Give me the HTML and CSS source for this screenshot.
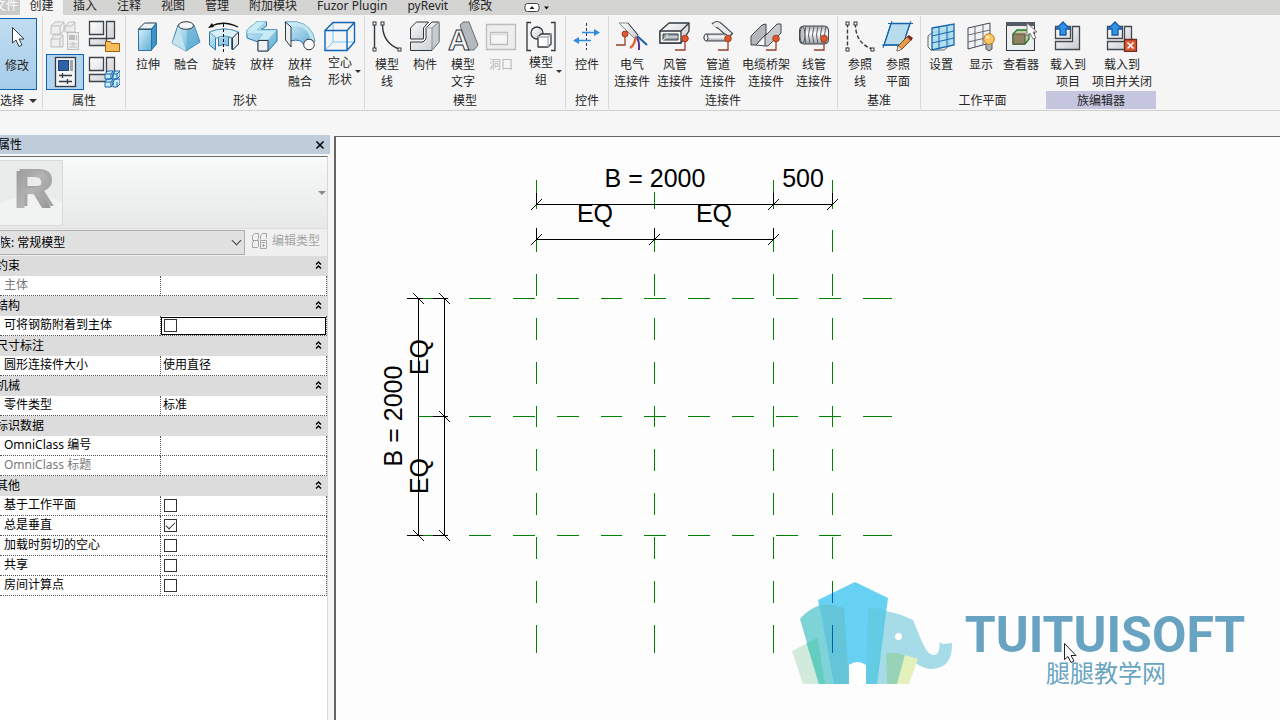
FILE: index.html
```html
<!DOCTYPE html>
<html lang="zh-CN">
<head>
<meta charset="utf-8">
<title>族编辑器</title>
<link rel="stylesheet" href="styles.css">
</head>
<body>
<svg class="defs" aria-hidden="true">
  <defs>
    <linearGradient id="blue" x1="0" y1="0" x2="1" y2="1"><stop offset="0" stop-color="#d5f0f9"/><stop offset="1" stop-color="#5fabd5"/></linearGradient>
    <linearGradient id="pale" x1="0" y1="0" x2="1" y2="1"><stop offset="0" stop-color="#ffffff"/><stop offset="1" stop-color="#c8cace"/></linearGradient>
    <linearGradient id="metal" x1="0" y1="0" x2="0" y2="1"><stop offset="0" stop-color="#a9adb1"/><stop offset=".4" stop-color="#ffffff"/><stop offset="1" stop-color="#9a9ea2"/></linearGradient>
    <linearGradient id="rgrey" x1="0" y1="0" x2="1" y2="1"><stop offset="0" stop-color="#929292"/><stop offset=".5" stop-color="#b4b4b4"/><stop offset="1" stop-color="#8d8d8d"/></linearGradient>
    <g id="plug"><path d="M26 17V30H16" fill="none" stroke="#94402a" stroke-width="1.3"/><circle cx="26" cy="18.500" r="3.300" fill="#e4572e" stroke="#9c3c20"/></g>
  </defs>
</svg>

<nav class="tabs">
  <button class="tab file">文件</button>
  <button class="tab current">创建</button>
  <button class="tab">插入</button>
  <button class="tab">注释</button>
  <button class="tab">视图</button>
  <button class="tab">管理</button>
  <button class="tab">附加模块</button>
  <button class="tab">Fuzor Plugin</button>
  <button class="tab">pyRevit</button>
  <button class="tab">修改</button>
  <button class="tab collapse" aria-label="最小化功能区"><svg width="26" height="12"><rect x="1" y="1.500" width="14" height="8" rx="2.500" fill="#fff" stroke="#444"/><path d="M5.500 7L8 4l2.500 3z" fill="#222"/><path d="M20 4.500h5L22.500 7.500z" fill="#111"/></svg></button>
</nav>

<header class="ribbon">
  <section class="panel select">
    <div class="tools">
      <button class="tool modify"><svg class="icon" viewBox="0 0 32 32"><path d="M11.500 6.500V22l3.500-3 3 6.500 3-1.500-3-6h5z" fill="#fff" stroke="#333b44"/></svg><span>修改</span></button>
    </div>
    <h2>选择 <i class="caret"></i></h2>
  </section>

  <section class="panel props">
    <div class="quad">
      <button class="mini" aria-label="类型属性"><svg class="icon" viewBox="0 0 32 32" fill="#eee" stroke="#bdbdbd"><path d="M2 6l4-4h9v8l-3 4H2zM16 6l4-4h6v10H16zM2 19l3-4h9v12H2z"/><path d="M2 6h9l4-4M11 6v8M16 6h7l3-4M2 19h9l3-4M11 19v8"/><rect x="18.500" y="12.500" width="11" height="17"/><rect x="20.500" y="15.500" width="5" height="4" fill="#bbb"/><path d="M27.500 15v5M20 24h8M24 22v4M20 27h8"/></svg></button>
      <button class="mini" aria-label="族类别"><svg class="icon" viewBox="0 0 32 32"><g fill="url(#pale)" stroke="#3c434b" stroke-width="1.300"><path d="M1.500 1.500h14v13h-14zM18.500 1.500h8v17h-8zM1.500 18.500h17v7h-17z"/></g><path d="M17.500 21.500h5l1 2h8v8h-14z" fill="#f3bd59" stroke="#a55c12"/></svg></button>
      <button class="mini on" aria-label="属性"><svg class="icon" viewBox="0 0 32 32"><rect x="6.500" y="1.500" width="20" height="29" fill="#f2f4f5" stroke="#333b44" stroke-width="1.300"/><rect x="9.500" y="4.500" width="10" height="10" fill="#2f61a6" stroke="#1d4377"/><path d="M22.500 4v11" stroke="#9da4aa" stroke-width="3"/><path d="M10 19.500h13M13.500 17v5M10 25.500h13M18.500 23v5" stroke="#333b44" stroke-width="1.300"/></svg></button>
      <button class="mini" aria-label="族类型"><svg class="icon" viewBox="0 0 32 32"><g fill="url(#pale)" stroke="#3c434b" stroke-width="1.300"><path d="M1.500 1.500h14v13h-14zM18.500 1.500h8v17h-8zM1.500 18.500h17v7h-17z"/></g><g fill="#c9ecfa" stroke="#1765ac"><path d="M17 18l3-3h5v5l-2 3h-6zM25 18l2-3h5v5l-3 3h-4zM17 26l2-3h6v5l-2 3h-6zM25 26l2-3h5v5l-3 3h-4z"/><path d="M17 18h6l2-3M23 18v5M25 18h4l3-3M29 18v5M17 26h6l2-3M23 26v5M29 26v5"/></g></svg></button>
    </div>
    <h2>属性</h2>
  </section>

  <section class="panel shapes">
    <div class="tools">
      <button class="tool"><svg class="icon" viewBox="0 0 32 32" stroke-linejoin="round"><path d="M6.500 9.500h13v21h-13z" fill="url(#blue)" stroke="#2475a8"/><path d="M6.500 9l6-6h12l-5 6z" fill="#e9f2f5" stroke="#30383f"/><path d="M19.500 9l5-6v21l-5 6z" fill="#3f94c7" stroke="#2475a8"/></svg><span>拉伸</span></button>
      <button class="tool"><svg class="icon" viewBox="0 0 32 32"><path d="M8 5L2 23l14 8 14-9-6-17z" fill="url(#blue)" stroke="#4087ae"/><path d="M9 8L2 23l14 8z" fill="#c3e3ef"/><path d="M17 9l-1 22 14-9-6-16z" fill="#5ba9d0" opacity=".6"/><ellipse cx="16" cy="5.500" rx="7.500" ry="3.800" fill="#f4f7f8" stroke="#30383f"/></svg><span>融合</span></button>
      <button class="tool"><svg class="icon" viewBox="0 0 32 32"><path d="M1.500 12Q16 6 30.500 12v12l-6 6-1-1V18l-3-1v9q-5-3-10 0v-9l-3 1v12l-6-5z" fill="url(#blue)" stroke="#2d79a5"/><path d="M1.500 12Q16 6 30.500 12l-6 6q-8-4-16 0z" fill="#dbeff6" stroke="#5ba0c4"/><path d="M24.500 18l6-6v12l-6 6z" fill="#e5e7e9" stroke="#30383f"/><path d="M3 6Q16 0 30 7" fill="none" stroke="#111" stroke-width="1.300"/><path d="M0 8l4-5 2 4z" fill="#111"/><path d="M15.500 4v28" stroke="#111" stroke-dasharray="3 2"/></svg><span>旋转</span></button>
      <button class="tool"><svg class="icon" viewBox="0 0 32 32" stroke-linejoin="round"><path d="M1 10L11 1.500h9.500V6L15 9.500h16V21l-9 10H12V22L1 18z" fill="url(#blue)" stroke="#2475a8"/><path d="M1 10L11 1.500h9.500L11 10l4 0h16l-9 10H12l5-6H1z" fill="#c8ebf4" stroke="#8cc6df"/><path d="M12 20.500h10v10.500H12z" fill="#f1f2f3" stroke="#30383f"/></svg><span>放样</span></button>
      <button class="tool"><svg class="icon" viewBox="0 0 32 32"><path d="M1 2h12q15 3 18 19l-11 4q-3-7-13-4z" fill="url(#blue)" stroke="#2475a8"/><path d="M7 6q17-1 19 13l5 2Q28 5 13 2H1z" fill="#c8ebf4" opacity=".8"/><path d="M1.500 2L7 7v20l-5.500-7z" fill="#eceeef" stroke="#30383f"/><circle cx="25" cy="24.500" r="5.300" fill="#fafafa" stroke="#30383f"/></svg><span>放样<br>融合</span></button>
      <button class="tool split"><svg class="icon" viewBox="0 0 32 32"><path d="M1 30.500L9 22V2.500M9 22h21.500" fill="none" stroke="#77c5f7"/><path d="M1 10.500h22v20H1zM1 10.500l8-8h21.500v19.500L23 30.500M23 10.500l7.500-8" fill="none" stroke="#1065b7" stroke-width="1.400"/></svg><span>空心<br>形状</span><i class="caret"></i></button>
    </div>
    <h2>形状</h2>
  </section>

  <section class="panel model">
    <div class="tools">
      <button class="tool"><svg class="icon" viewBox="0 0 32 32" fill="none" stroke="#30383f"><path d="M3.500 3.500v26M11.500 3.500Q11 23 29 29.500" stroke-width="1.400"/><g fill="#fff"><rect x="2" y="2" width="3" height="3"/><rect x="2" y="28" width="3" height="3"/><rect x="10" y="2" width="3" height="3"/><rect x="27" y="28" width="3" height="3"/></g></svg><span>模型<br>线</span></button>
      <button class="tool"><svg class="icon" viewBox="0 0 32 32" stroke="#30383f" stroke-linejoin="round"><path d="M1.500 8l6-6h12l-5 6v11h-13z" fill="url(#pale)"/><path d="M1.500 22H14l3-3V8l6-6h7v20l-7 8.500H1.500z" fill="url(#pale)"/><path d="M17 8h6l7-6" fill="none" stroke="#a5a9ad"/><path d="M23 8v22l7-8V2z" fill="#c7cace" stroke="#8a9096"/></svg><span>构件</span></button>
      <button class="tool"><svg class="icon" viewBox="0 0 32 32"><path d="M13 5l3-3h6l9 23-4 5h-6z" fill="#b5b9bd" stroke="#666c72"/><text class="glyph" x="1" y="30">A</text></svg><span>模型<br>文字</span></button>
      <button class="tool" disabled><svg class="icon" viewBox="0 0 32 32" fill="#eee" stroke="#bdbdbd" stroke-width="1.300"><path d="M1.500 4.500h29v25h-29z"/><path d="M5.500 12.500h17v12h-17z" fill="#f5f5f5"/><path d="M7 14.500h14" stroke="#ddd"/></svg><span>洞口</span></button>
      <button class="tool split"><svg class="icon" viewBox="0 0 32 32" fill="none" stroke="#30383f" stroke-width="1.300"><path d="M6 2.500H2v28h4M26 2.500h4v28h-4"/><circle cx="12" cy="13" r="6" fill="url(#pale)"/><path d="M13 17l3-3h10v10l-3 3H13z" fill="#fff" stroke-linejoin="round"/><path d="M13 17h10l3-3M23 17v10" stroke="#a9adb1"/></svg><span>模型<br>组</span><i class="caret"></i></button>
    </div>
    <h2>模型</h2>
  </section>

  <section class="panel control">
    <div class="tools">
      <button class="tool"><svg class="icon" viewBox="0 0 32 32"><path d="M15.500 3v27" stroke="#30383f" stroke-dasharray="3 2"/><path d="M11 12.500h14M6 20.500h14" stroke="#2f8ae0" stroke-width="1.300"/><path d="M23 9l6 3.500-6 3.500zM8 17l-6 3.500L8 24z" fill="#2f8ae0"/></svg><span>控件</span></button>
    </div>
    <h2>控件</h2>
  </section>

  <section class="panel connect">
    <div class="tools">
      <button class="tool"><svg class="icon" viewBox="0 0 32 32" fill="none"><path d="M19 14l12 11" stroke="#155fad" stroke-width="2"/><path d="M19 15q5 5 4 15" stroke="#5b3494" stroke-width="2"/><path d="M20 15q-1 10-6 13" stroke="#e4652e" stroke-width="2.500"/><path d="M3 3h9l10 12-4 3z" fill="url(#pale)" stroke="#858b90"/><path d="M12 3l10 12" stroke="#30383f"/><path d="M9 15v10H0" stroke="#94402a" stroke-width="1.300"/><circle cx="9" cy="14" r="3" fill="#e4572e" stroke="#9c3c20"/></svg><span>电气<br>连接件</span></button>
      <button class="tool"><svg class="icon" viewBox="0 0 32 32" stroke="#30383f" stroke-linejoin="round"><path d="M1 11l9-8h20v8l-8 12H1z" fill="url(#pale)" stroke-width="1.300"/><path d="M1 11h21v12H1zM22 11l8-8" fill="#f7f7f7" stroke-width="1.300"/><path d="M4 14h15v6H4z" fill="#9ca5ab"/><path d="M8 14v3l-4 3M8 17h11" fill="none" stroke="#eee"/><use href="#plug"/></svg><span>风管<br>连接件</span></button>
      <button class="tool"><svg class="icon" viewBox="0 0 32 32"><path d="M12 6q3-3 6 0l11 10" fill="none" stroke="#41484e" stroke-width="7"/><path d="M12 6q3-3 6 0l10 9" fill="none" stroke="#e8eaec" stroke-width="4.500"/><path d="M4 14h20q4 3 0 7H4q-4-3 0-7z" fill="url(#metal)" stroke="#41484e"/><ellipse cx="4" cy="17.500" rx="2" ry="3.500" fill="#eee" stroke="#41484e"/><use href="#plug"/></svg><span>管道<br>连接件</span></button>
      <button class="tool wide"><svg class="icon" viewBox="0 0 32 32" stroke="#41484e" stroke-linejoin="round"><path d="M1 16L12 5l4-1v10L6 25H1z" fill="#b4b8bc"/><path d="M6 25l10-11h9L15 26z" fill="#f8f8f8"/><path d="M15 16L27 4h4v9L18 26h-3z" fill="#c7cacd"/><use href="#plug"/></svg><span>电缆桥架<br>连接件</span></button>
      <button class="tool"><svg class="icon" viewBox="0 0 32 32"><rect x="1.500" y="6" width="29" height="18" rx="4" fill="url(#metal)" stroke="#41484e"/><path d="M8 6q-3 9 0 18M12 6q-3 9 0 18M16 6q-3 9 0 18M20 6q-3 9 0 18M24 6q-3 9 0 18M28 6q-3 9 0 18" fill="none" stroke="#5b6166"/><ellipse cx="4.500" cy="15" rx="2.500" ry="8" fill="#c2c5c8" stroke="#41484e"/><use href="#plug"/></svg><span>线管<br>连接件</span></button>
    </div>
    <h2>连接件</h2>
  </section>

  <section class="panel datum">
    <div class="tools">
      <button class="tool"><svg class="icon" viewBox="0 0 32 32" fill="none" stroke="#30383f"><path d="M3.500 3.500v26M11.500 3.500Q11 23 29 29.500" stroke-width="1.400" stroke-dasharray="4 2"/><g fill="#fff"><rect x="2" y="2" width="3" height="3"/><rect x="2" y="28" width="3" height="3"/><rect x="10" y="2" width="3" height="3"/><rect x="27" y="28" width="3" height="3"/></g></svg><span>参照<br>线</span></button>
      <button class="tool"><svg class="icon" viewBox="0 0 32 32"><path d="M9 3.500h19L21 25H2z" fill="#b7ddec" stroke="#1765ac" stroke-width="1.300"/><path d="M6 3.500h25M0 25h20M10 1L1 28M29 1l-5 14" stroke="#1765ac"/><path d="M26 16l4 3-10 10-5 2 1-5z" fill="#e59a4d" stroke="#784513"/><path d="M25 17l2-2 4 3-2 3z" fill="#7d2b20"/><path d="M16 26l4 3-5 2z" fill="#f7e7cf" stroke="#555" stroke-width=".500"/></svg><span>参照<br>平面</span></button>
    </div>
    <h2>基准</h2>
  </section>

  <section class="panel plane">
    <div class="tools">
      <button class="tool"><svg class="icon" viewBox="0 0 32 32"><path d="M3 16l5-4h16v14l-5 4H6l-3-3z" fill="#eff1f2" stroke="#62686d"/><path d="M7 8l22-4v21L7 30z" fill="#a6dcf0" fill-opacity=".85" stroke="#1765ac" stroke-width="1.300"/><path d="M14 7v22M22 5v21M7 16l22-5M7 23l22-5" stroke="#1765ac" fill="none"/></svg><span>设置</span></button>
      <button class="tool"><svg class="icon" viewBox="0 0 32 32"><path d="M3 8l22-5v20L3 29z" fill="#f0f1f2" stroke="#41484e"/><path d="M10 6v21M18 4v21M3 15l22-5M3 22l22-5" stroke="#666c72" fill="none"/><path d="M21 23h6v6l-3 2-3-2z" fill="#aab0b5" stroke="#555"/><circle cx="24" cy="19" r="5.300" fill="#fac765" stroke="#bd7a21"/><circle cx="22.500" cy="17" r="1.500" fill="#fff3cd"/></svg><span>显示</span></button>
      <button class="tool"><svg class="icon" viewBox="0 0 32 32"><rect x="1.500" y="2.500" width="28" height="28" fill="#eceeef" stroke="#30383f"/><path d="M1 4h29" stroke="#535a63" stroke-width="4"/><path d="M8 14l4-4h12v9l-4 5H8z" fill="#c7c1a6" stroke="#14851c" stroke-width="1.300"/><path d="M8 14h12v10H8z" fill="#908364" stroke="#555039"/><path d="M22 3v13l3-3 3 6 3-1-3-6h4z" fill="#fff" stroke="#777"/></svg><span>查看器</span></button>
    </div>
    <h2>工作平面</h2>
  </section>

  <section class="panel editor">
    <div class="tools">
      <button class="tool"><svg class="icon" viewBox="0 0 32 32" stroke-width="1.300"><path d="M3.500 6.500h15v12h-15zM20.500 6.500h7v23h-24v-8h17z" fill="url(#pale)" stroke="#41484e"/><path d="M11 2l7 7h-4v6H8V9H4z" fill="#2f91e8" stroke="#1559a5"/></svg><span>载入到<br>项目</span></button>
      <button class="tool close-load"><svg class="icon" viewBox="0 0 32 32" stroke-width="1.300"><path d="M1.500 6.500h15v12h-15zM18.500 6.500h7v23h-24v-8h17z" fill="url(#pale)" stroke="#41484e"/><path d="M9 2l7 7h-4v6H6V9H2z" fill="#2f91e8" stroke="#1559a5"/><path d="M18.500 19.500h12v12h-12z" fill="#d85a36" stroke="#6f2c1f"/><path d="M21.500 22.500l6 6m0-6l-6 6" stroke="#fff" stroke-width="1.500"/></svg><span>载入到<br>项目并关闭</span></button>
    </div>
    <h2>族编辑器</h2>
  </section>
</header>

<main class="work">
  <aside class="palette">
    <div class="title"><h1>属性</h1><button aria-label="关闭"><svg width="10" height="10"><path d="M1.500 1.500l7 7m0-7l-7 7" stroke="#000" stroke-width="1.600"/></svg></button></div>
    <div class="body">
      <button class="preview" aria-label="类型选择器">
        <svg class="thumb" viewBox="0 0 62 64"><rect width="62" height="64" fill="#eaebeb"/><path d="M0 42Q40 26 62 42v22H0z" fill="#f1f2f2"/><text class="letter back" x="16" y="45">R</text><text class="letter" x="13" y="47">R</text></svg>
        <i class="caret"></i>
      </button>
      <div class="family">
        <select aria-label="族"><option>族: 常规模型</option></select>
        <button disabled><svg width="18" height="18" viewBox="0 0 18 18" fill="none" stroke="#a5a5a5"><path d="M1.500 3.500l2-2h4v5l-1 2h-5zM9.500 3.500l2-2h4v5M9.500 3.500v4M1.500 10.500l2-2h4v6l-1 1h-5z"/><path d="M9.500 8.500h6v8h-6zM11 10.500h3M11 13.500h3M12.500 12v3"/></svg>编辑类型</button>
      </div>
      <table>
        <colgroup><col class="name"><col></colgroup>
        <tbody>
          <tr class="group"><th colspan="2"><button>约束<svg width="7" height="8"><path d="M1 3.500L3.500 1 6 3.500M1 7.500L3.500 5 6 7.500"/></svg></button></th></tr>
          <tr class="muted"><th>主体</th><td></td></tr>
          <tr class="group"><th colspan="2"><button>结构<svg width="7" height="8"><path d="M1 3.500L3.500 1 6 3.500M1 7.500L3.500 5 6 7.500"/></svg></button></th></tr>
          <tr><th><label for="rebar">可将钢筋附着到主体</label></th><td class="focus"><input type="checkbox" id="rebar"></td></tr>
          <tr class="group"><th colspan="2"><button>尺寸标注<svg width="7" height="8"><path d="M1 3.500L3.500 1 6 3.500M1 7.500L3.500 5 6 7.500"/></svg></button></th></tr>
          <tr><th>圆形连接件大小</th><td>使用直径</td></tr>
          <tr class="group"><th colspan="2"><button>机械<svg width="7" height="8"><path d="M1 3.500L3.500 1 6 3.500M1 7.500L3.500 5 6 7.500"/></svg></button></th></tr>
          <tr><th>零件类型</th><td>标准</td></tr>
          <tr class="group"><th colspan="2"><button>标识数据<svg width="7" height="8"><path d="M1 3.500L3.500 1 6 3.500M1 7.500L3.500 5 6 7.500"/></svg></button></th></tr>
          <tr><th>OmniClass 编号</th><td></td></tr>
          <tr class="muted"><th>OmniClass 标题</th><td></td></tr>
          <tr class="group"><th colspan="2"><button>其他<svg width="7" height="8"><path d="M1 3.500L3.500 1 6 3.500M1 7.500L3.500 5 6 7.500"/></svg></button></th></tr>
          <tr><th><label for="workplane">基于工作平面</label></th><td><input type="checkbox" id="workplane"></td></tr>
          <tr><th><label for="vertical">总是垂直</label></th><td><input type="checkbox" id="vertical" checked></td></tr>
          <tr><th><label for="voids">加载时剪切的空心</label></th><td><input type="checkbox" id="voids"></td></tr>
          <tr><th><label for="shared">共享</label></th><td><input type="checkbox" id="shared"></td></tr>
          <tr><th><label for="room">房间计算点</label></th><td><input type="checkbox" id="room"></td></tr>
        </tbody>
      </table>
    </div>
  </aside>

  <section class="canvas">
    <svg class="drawing">
      <defs>
        <path id="vline" d="M0 230v22M0 274v22M0 318v22M0 362v22M0 406v21M0 449v22M0 493v22M0 537v22M0 581v22M0 625v28"/>
        <path id="hline" d="M469 0h22M513 0h22M557 0h22M601 0h21M644 0h22M688 0h22M732 0h22M776 0h22M819 0h22M863 0h29"/>
        <path id="tick" d="M-5.500 5.500l11-11"/>
        <path id="vtick" d="M-5.500-5.500l11 11"/>
      </defs>
      <g transform="translate(-336 -137)">
        <g>
          <path d="M792 651L817.500 638 825 684H803z" fill="#d1eadb"/>
          <path d="M800 619q7-9 20-14 12-2 24 3l5 76h-30z" fill="#7dd3d5"/>
          <path d="M806.500 643l11-5 7.500 46h-6z" fill="#65cdbf"/>
          <path d="M868 608q10 0 18 3 15 3 27 9l9 22q6 13 11 13 7 1 6.500-13l3.500 2 9-1q1 26-22 26-7-1-15-6l-9 21h-40z" fill="#a6dce8"/>
          <path d="M818 600l37-18 33 16-11 86h-43z" fill="#67d1f4"/>
          <path d="M820 605q12-2 24 3l5 76h-15z" fill="#64c5d8"/>
          <path d="M868 608q10 0 18 3l-9 73h-11z" fill="#64cbe5"/>
          <path d="M886 653q11-1 19 2l-8 29h-10z" fill="#98d3b8"/>
          <path d="M905 655l13 4-9 25h-12z" fill="#e5f1bb"/>
          <path d="M849 684v-19q8-6 17 0v19z" fill="#fff"/>
          <circle cx="898.500" cy="636.500" r="3.500" fill="#fff"/>
        </g>
        <g stroke="#008000" fill="none" shape-rendering="crispEdges">
          <path d="M536.500 180v29M654.500 192v17M773.500 180v29M832.500 180v29M419 298.500h14M419 416.500h14M419 535.500h14"/>
          <use href="#vline" x="536.500"/><use href="#vline" x="654.500"/><use href="#vline" x="773.500"/><use href="#vline" x="832.500"/>
          <use href="#hline" y="298.500"/><use href="#hline" y="416.500"/><use href="#hline" y="535.500"/>
          <path d="M832.500 592v11M832.500 625v28" stroke="#0060ac"/>
        </g>
        <g stroke="#000" fill="none" shape-rendering="crispEdges">
          <path d="M536 204.500h297M536 239.500h238M418.500 298v238M444.500 298v238"/>
          <path d="M536.500 193v12M773.500 193v12M832.500 193v12M536.500 228v12M654.500 228v12M773.500 228v12"/>
          <path d="M407 298.500h16M433 298.500h15M433 416.500h15M407 535.500h16M433 535.500h15"/>
          <use href="#tick" x="536.500" y="204.500"/><use href="#tick" x="773.500" y="204.500"/><use href="#tick" x="832.500" y="204.500"/>
          <use href="#tick" x="536.500" y="239.500"/><use href="#tick" x="654.500" y="239.500"/><use href="#tick" x="773.500" y="239.500"/>
          <use href="#vtick" x="418.500" y="298.500"/><use href="#vtick" x="444.500" y="298.500"/><use href="#vtick" x="444.500" y="416.500"/>
          <use href="#vtick" x="418.500" y="535.500"/><use href="#vtick" x="444.500" y="535.500"/>
        </g>
        <g class="dim">
          <text x="655" y="187">B = 2000</text>
          <text x="803" y="187">500</text>
          <text x="595" y="222">EQ</text>
          <text x="714" y="222">EQ</text>
          <text transform="translate(402 416) rotate(-90)">B = 2000</text>
          <text transform="translate(428 357) rotate(-90)">EQ</text>
          <text transform="translate(428 476) rotate(-90)">EQ</text>
        </g>
        <text class="brand" x="1105" y="652">TUITUISOFT</text>
        <text class="brand-cn" x="1106" y="682">腿腿教学网</text>
        <path d="M1064.500 643.500v16l3.500-3 3 6 3-1.500-3-5.500h5z" fill="#fff" stroke="#222"/>
      </g>
    </svg>
  </section>
</main>
</body>
</html>
```

FILE: styles.css
```css
* { box-sizing: border-box; }

body {
  margin: 0;
  height: 100vh;
  display: flex;
  flex-direction: column;
  overflow: hidden;
  background: #f6f6f6;
  color: #262626;
  font: 12px/17px "Noto Sans", "Noto Sans CJK SC", sans-serif;
}

button {
  margin: 0;
  padding: 0;
  border: 0;
  background: none;
  color: inherit;
  font: inherit;
}

svg { display: block; flex: none; }
.defs { position: absolute; width: 0; height: 0; }

h1, h2 { margin: 0; font-size: 12px; font-weight: 400; }

.caret {
  display: inline-block;
  border: 4px solid transparent;
  border-top-color: #333;
  border-bottom: 0;
}

/* Ribbon tabs */
.tabs { display: flex; height: 15px; background: #d4d4d2; }
.tab { padding: 0 10px 3px; line-height: 12px; white-space: nowrap; }
.tab.file { width: 20px; padding: 0 2px 3px 0; display: flex; justify-content: flex-end; background: #cbcbca; color: #fff; }
.tab.current { width: 43px; background: #f5f5f5; padding: 0 9px 3px; }
.tab.collapse { padding: 0 22px; }

/* Ribbon panels */
.ribbon {
  display: flex;
  height: 96px;
  padding-top: 1px;
  background: #f5f5f5;
  border-bottom: 1px solid #d0d0d0;
}
.panel {
  display: flex;
  flex-direction: column;
  justify-content: space-between;
  flex: none;
  border-right: 1px solid #d9d9d9;
  margin-bottom: 1px;
}
.panel h2 { padding-top: 2px; line-height: 16px; text-align: center; white-space: nowrap; }
.tools { display: flex; justify-content: center; }
.tool {
  width: 38px;
  padding-top: 4px;
  display: flex;
  flex-direction: column;
  align-items: center;
  position: relative;
  white-space: nowrap;
}
.tool span { margin-top: 4px; }
.tool:disabled { color: #b9b9b9; }
.icon { width: 32px; height: 32px; }

.split { width: 42px; }
.split span { margin-top: 2px; }
.split .caret { position: absolute; right: 0; bottom: 17px; border-width: 3px; border-bottom: 0; }

.select { width: 43px; }
.select .tools { justify-content: flex-start; }
.select h2 { text-align: left; }
.select .caret { margin-left: 2px; vertical-align: 2px; }
.modify { width: 37px; height: 72px; margin-top: 2px; padding: 2px 2px 0 0; border: 1px solid #0f63ae; border-left: 0; background: linear-gradient(#c0dcf0, #a7cdeb); }

.props { width: 83px; }
.quad { display: grid; grid-template-columns: 38px 36px; justify-content: center; column-gap: 2px; margin-top: 2px; }
.mini { height: 36px; display: grid; place-items: center; }
.mini.on { border: 1px solid #0f63ae; background: #b2d4ef; }

.shapes { width: 239px; }
.model { width: 201px; }
.control { width: 43px; }
.connect { width: 229px; }
.connect .tool { width: 43px; }
.connect .wide { width: 53px; }
.datum { width: 83px; }
.plane { width: 123px; border-right: 0; }
.plane .tools { justify-content: flex-start; }
.plane .tool { width: 40px; }
.editor { width: 114px; border-right: 0; }
.editor .tools { justify-content: flex-start; }
.editor .tool { width: 48px; }
.editor .close-load { width: 60px; }
.editor h2 { margin: 0 2px; background: #c5c5e0; }

.glyph { font: 700 30px "Liberation Sans", sans-serif; fill: #f7f7f7; stroke: #30383f; stroke-width: 1px; }

/* Work area */
.work { flex: 1; display: flex; min-height: 0; padding-top: 24px; }

.palette { width: 330px; flex: none; display: flex; flex-direction: column; color: #000; }
.title { height: 19px; display: flex; justify-content: space-between; align-items: center; background: #bfcddb; padding-right: 5px; }
.title h1 { margin-left: -2px; }
.body { flex: 1; margin: 2px 2px 0 0; border-top: 1px solid #6d6d6d; border-right: 1px solid #d8d8d8; background: #fff; }

.preview {
  display: flex;
  width: 100%;
  height: 72px;
  padding: 3px 1px 3px 0;
  justify-content: space-between;
  align-items: center;
  background: linear-gradient(#f8f9f9, #e7e8e8);
  border-bottom: 1px solid #dcdcdc;
}
.preview .caret { border-top-color: #8c8c8c; }
.thumb { width: 63px; height: 66px; border: 1px solid #d9dbdb; border-left: 0; }
.letter { font: 700 56px "Liberation Sans", sans-serif; font-size: 54px; fill: url(#rgrey); }
.letter.back { fill: #a6a6a6; }

.family { position: relative; display: flex; height: 27px; gap: 6px; align-items: center; background: #f0f0f0; }
.family select {
  appearance: none;
  width: 245px;
  height: 25px;
  padding: 0 0 0 1px;
  border: 1px solid #acacac;
  border-left: 0;
  border-radius: 0;
  background: #e1e1e1;
  color: #000;
  font: inherit;
  text-indent: -2px;
}
.family::after {
  content: "";
  position: absolute;
  left: 233px;
  top: 8px;
  width: 6px;
  height: 6px;
  border: solid #444;
  border-width: 0 1px 1px 0;
  transform: rotate(45deg);
}
.family button { display: flex; align-items: center; gap: 3px; padding-bottom: 4px; color: #a5a5a5; }

table { width: 100%; border-collapse: separate; border-spacing: 0; table-layout: fixed; }
.name { width: 160px; }
tr { height: 20px; }
th, td {
  height: 20px;
  padding: 0 0 0 4px;
  border-bottom: 1px dotted #555;
  font-weight: 400;
  text-align: left;
  line-height: 17px;
  vertical-align: top;
}
td { padding-left: 2px; border-left: 1px dotted #555; border-right: 1px dotted #555; }
.group th { padding: 0; border: 0; background: #dcdcdc; }
.group button { display: flex; justify-content: space-between; align-items: center; width: 100%; height: 20px; padding: 0 5px 2px 0; text-indent: -4px; }
.group svg { fill: none; stroke: #000; stroke-width: 1.4px; }
.muted { color: #7a7a7a; }
.focus { outline: 1px solid #000; outline-offset: -2px; }

input[type="checkbox"] {
  appearance: none;
  display: grid;
  place-items: center;
  width: 13px;
  height: 13px;
  margin: 3px 0 0 1px;
  border: 1px solid #333;
  background: #fff;
}
input:checked::after {
  content: "";
  width: 8px;
  height: 4px;
  border: solid #333;
  border-width: 0 0 1px 1px;
  transform: translateY(-1px) rotate(-45deg);
}

.canvas { flex: 1; min-width: 0; margin: 1px 0 0 4px; border: solid #656565; border-width: 1px 0 0 2px; background: #fdfdfd; }
.drawing { width: 100%; height: 100%; }
.dim { font: 25px "Liberation Sans", Arial, sans-serif; text-anchor: middle; fill: #000; }
.brand { font: 700 50px Roboto, sans-serif; text-anchor: middle; fill: #68a4c1; }
.brand-cn { font: 24px "Noto Sans CJK SC", sans-serif; text-anchor: middle; fill: #68a4c1; }
```
